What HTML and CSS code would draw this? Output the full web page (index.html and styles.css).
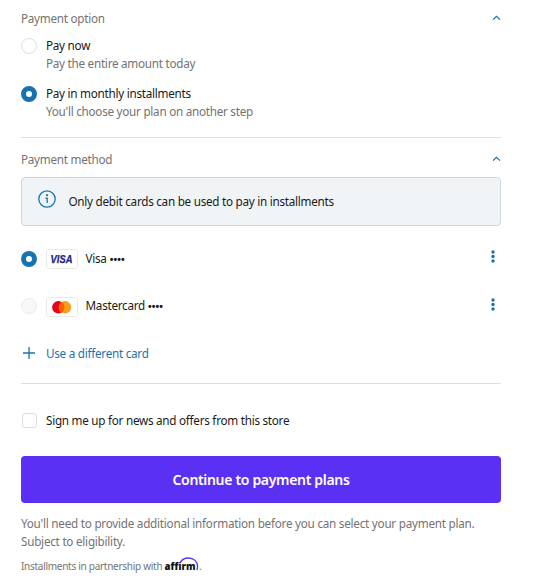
FILE: index.html
```html
<!DOCTYPE html>
<html lang="en">

<head>
  <meta charset="UTF-8" />
  <title>Checkout payment</title>
  <link rel="stylesheet" href="styles.css">
</head>

<body>
  <main class="checkout">
    <!-- Payment option -->
    <section class="section">
      <div class="section-head">
        <h2>Payment option</h2>
        <svg class="chevron" viewBox="0 0 9 6"><path d="M1 4.6 4.5 1.3 8 4.6" /></svg>
      </div>
      <div class="option">
        <span class="radio"></span>
        <div class="option-text">
          <p>Pay now</p>
          <p class="muted">Pay the entire amount today</p>
        </div>
      </div>
      <div class="option">
        <span class="radio checked"></span>
        <div class="option-text">
          <p>Pay in monthly installments</p>
          <p class="muted">You'll choose your plan on another step</p>
        </div>
      </div>
    </section>

    <!-- Payment method -->
    <section class="section method">
      <div class="section-head">
        <h2>Payment method</h2>
        <svg class="chevron" viewBox="0 0 9 6"><path d="M1 4.6 4.5 1.3 8 4.6" /></svg>
      </div>
      <div class="banner">
        <svg class="info" viewBox="0 0 18 18">
          <circle class="ring" cx="9" cy="9" r="8.2" />
          <circle class="dot" cx="9" cy="5.2" r="1.1" />
          <path d="M7.4 8.2H9.2V13" />
        </svg>
        <p>Only debit cards can be used to pay in installments</p>
      </div>
      <div class="card-row">
        <span class="radio checked"></span>
        <svg class="card-logo" viewBox="0 0 32 20">
          <rect x=".5" y=".5" width="31" height="19" rx="2" />
          <text class="visa" x="4.6" y="13.5" textLength="21.8" lengthAdjust="spacingAndGlyphs">VISA</text>
        </svg>
        <p>Visa <span class="dots">••••</span></p>
        <svg class="more" viewBox="0 0 4 13"><circle cx="2" cy="2" r="1.7" /><circle cx="2" cy="6.5" r="1.7" /><circle cx="2" cy="11" r="1.7" /></svg>
      </div>
      <div class="card-row">
        <span class="radio disabled"></span>
        <svg class="card-logo" viewBox="0 0 32 20">
          <rect x=".5" y=".5" width="31" height="19" rx="2" />
          <circle fill="#eb001b" cx="12.3" cy="10.3" r="6.2" />
          <circle fill="#f79e1b" cx="19" cy="10.3" r="6.2" />
          <path fill="#ff5f00" d="M15.65 5.08a6.2 6.2 0 0 1 0 10.44a6.2 6.2 0 0 1 0-10.44z" />
        </svg>
        <p>Mastercard <span class="dots">••••</span></p>
        <svg class="more" viewBox="0 0 4 13"><circle cx="2" cy="2" r="1.7" /><circle cx="2" cy="6.5" r="1.7" /><circle cx="2" cy="11" r="1.7" /></svg>
      </div>
      <a class="add-card" href="#">
        <svg class="plus" viewBox="0 0 16 16"><path d="M8 2v12M2 8h12" /></svg>
        <span>Use a different card</span>
      </a>
    </section>

    <!-- Newsletter -->
    <div class="signup">
      <span class="checkbox"></span>
      <p>Sign me up for news and offers from this store</p>
    </div>

    <button class="submit" type="button">Continue to payment plans</button>

    <p class="note">You'll need to provide additional information before you can select your payment plan.<br>Subject to eligibility.</p>
    <p class="partner">
      <span>Installments in partnership with</span>
      <svg class="affirm" viewBox="0 0 38 16">
        <text x=".5" y="13" textLength="31" lengthAdjust="spacingAndGlyphs">affirm</text>
        <path d="M16.2 5.6C17.5 3 20.8 1 24.5 1C29.8 1 33.6 4.6 33.6 9.2C33.6 10.8 33.3 12 32.9 12.9" />
        <text class="stop" x="35" y="13">.</text>
      </svg>
    </p>
  </main>
</body>

</html>
```
FILE: styles.css
```css
* {
  box-sizing: border-box;
}

body {
  margin: 0;
  background: #fff;
  color: #1a1a1a;
  font: 11.7px/18px "Noto Sans", "Open Sans", sans-serif;
  letter-spacing: -.26px;
}

h2,
p {
  margin: 0;
}

svg {
  display: block;
  flex: none;
}

.checkout {
  width: 480px;
  margin: 10px 0 0 21px;
}

/* sections */
.section {
  height: 128px;
  border-bottom: 1px solid #dfdfdf;
}

.section.method {
  height: 246px;
  padding-top: 13px;
}

.section-head {
  display: flex;
  justify-content: space-between;
  height: 27px;
}

.section-head h2 {
  margin-top: -1px;
  font-size: 11.7px;
  font-weight: 400;
  color: #737373;
}

.chevron {
  width: 9px;
  height: 6px;
  margin-top: 5px;
}

.chevron path,
.plus path,
.info path,
.info .ring {
  fill: none;
  stroke: #1773b0;
  stroke-width: 1.3;
}

.muted {
  color: #737373;
}

/* options */
.option {
  display: flex;
  gap: 10px;
  height: 47.5px;
}

.option-text {
  margin-top: -1px;
}

.radio {
  flex: none;
  width: 16px;
  height: 16px;
  margin: 1px -1px 0 0;
  border: 1px solid #dedede;
  border-radius: 50%;
}

.radio.checked {
  border: 5px solid #1773b0;
}

.radio.disabled {
  background: #f8f8f8;
  border-color: #ececec;
}

/* info banner */
.banner {
  display: flex;
  align-items: center;
  height: 49px;
  padding-left: 15.5px;
  background: #f0f4f7;
  border: 1px solid #c9d8e4;
  border-radius: 4px;
}

.banner p,
.card-row p,
.signup p {
  padding-bottom: 2px;
}

.info {
  width: 18px;
  height: 18px;
  margin: -5px 13px 0 0;
}

.info .dot {
  fill: #1773b0;
}

.section.method .section-head {
  height: 26px;
}

/* cards */
.card-row {
  display: flex;
  align-items: center;
  height: 20px;
  margin-bottom: 27.5px;
}

.banner + .card-row {
  margin-top: 23px;
}

.card-row .radio {
  margin-top: -1px;
}

.card-logo {
  width: 32px;
  height: 20px;
  margin: 0 7.5px 0 10px;
}

.card-logo rect {
  fill: #fff;
  stroke: #e9e9e9;
}

.visa {
  fill: #1a2484;
  stroke: #1a2484;
  stroke-width: .25px;
  font: italic 700 10px "Liberation Sans", sans-serif;
  letter-spacing: 0;
}

.dots {
  font-size: 11px;
  font-weight: 600;
  letter-spacing: -.4px;
}

.more {
  width: 4px;
  height: 13px;
  margin: -5px 6px 0 auto;
  fill: #1773b0;
}

.add-card {
  display: flex;
  align-items: center;
  gap: 9px;
  height: 18px;
  color: #1773b0;
  text-decoration: none;
}

.plus {
  width: 16px;
  height: 16px;
}

/* signup */
.signup {
  display: flex;
  align-items: center;
  gap: 9px;
  height: 18px;
  margin-top: 28px;
}

.checkbox {
  width: 15px;
  height: 15px;
  margin: -2px 0 0 1px;
  border: 1px solid #dedede;
  border-radius: 3px;
}

.submit {
  display: block;
  width: 100%;
  height: 47px;
  margin-top: 26px;
  padding: 0;
  border: 0;
  border-radius: 4px;
  background: #5a31f4;
  color: #fff;
  font: 600 14px/20px "Noto Sans", "Open Sans", sans-serif;
  letter-spacing: -.32px;
}

.note {
  margin-top: 11px;
  color: #737373;
  letter-spacing: -.24px;
}

.partner {
  display: flex;
  height: 18px;
  margin-top: 7px;
  color: #737373;
  font-size: 10px;
  letter-spacing: -.28px;
}

.affirm {
  width: 38px;
  height: 16px;
  margin-left: 2px;
}

.affirm text {
  fill: #101010;
  font: 800 10.5px "Open Sans", sans-serif;
  letter-spacing: 0;
}

.affirm .stop {
  fill: #737373;
  font-weight: 400;
}

.affirm path {
  fill: none;
  stroke: #5a31f4;
  stroke-width: 1.3;
}
```
